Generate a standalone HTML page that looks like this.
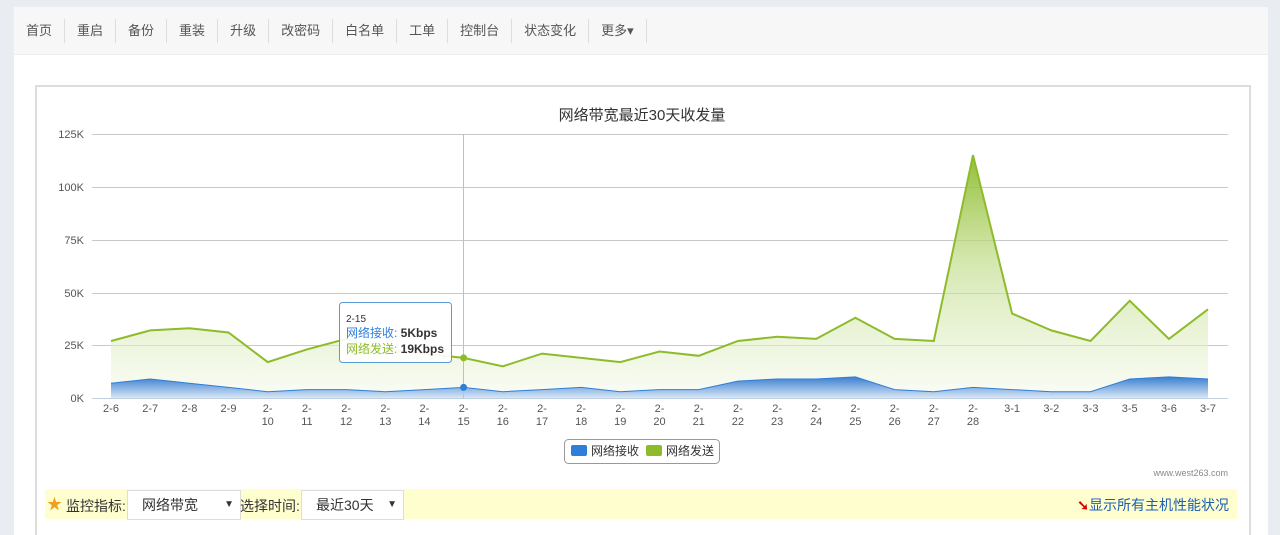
<!DOCTYPE html>
<html><head><meta charset="utf-8"><style>
html,body{margin:0;width:1280px;height:535px;overflow:hidden}
body{background:#e9edf2;font-family:"Liberation Sans","Noto Sans CJK SC",sans-serif;position:relative}
.panel{position:absolute;left:14px;top:7px;width:1254px;height:528px;background:#fff}
.nav{height:47px;background:#f7f7f7;border-bottom:1px solid #eee;display:flex;align-items:center}
.nav span{font-size:13px;color:#555;padding:0 12px;border-right:1px solid #ddd;line-height:24px}
.box{position:absolute;left:35px;top:85px;width:1212px;height:460px;border:2px solid #ddd;border-bottom:none}
.bar{position:absolute;left:45px;top:489px;width:1192px;height:30px;background:#fefecf;font-size:14px;color:#333}
.sel{position:absolute;top:1px;height:30px;background:#fff;border:1px solid #ddd;box-sizing:border-box;font-size:14px;line-height:28px;padding-left:14px}
.sel i{position:absolute;right:6px;top:0;font-style:normal;font-size:10px}
</style></head><body>
<div class="panel">
<div class="nav"><span>首页</span><span>重启</span><span>备份</span><span>重装</span><span>升级</span><span>改密码</span><span>白名单</span><span>工单</span><span>控制台</span><span>状态变化</span><span>更多▾</span></div>
</div>
<div class="box"></div>
<svg width="1280" height="535" style="position:absolute;left:0;top:0" font-family="Liberation Sans, Noto Sans CJK SC, sans-serif">
<defs>
<linearGradient id="g" x1="0" y1="0" x2="0" y2="1"><stop offset="0" stop-color="#8dbb2a" stop-opacity=".95"/><stop offset=".45" stop-color="#c4de90" stop-opacity=".7"/><stop offset="1" stop-color="#f4f9ea" stop-opacity=".5"/></linearGradient>
<linearGradient id="b" x1="0" y1="0" x2="0" y2="1"><stop offset="0" stop-color="#3a7fd0"/><stop offset="1" stop-color="#d8e6f5"/></linearGradient>
</defs>
<text x="642" y="120" text-anchor="middle" font-size="15" fill="#333">网络带宽最近30天收发量</text>
<g stroke="#c8c8c8" stroke-width="1">
<line x1="92" y1="134.5" x2="1228" y2="134.5"/><line x1="92" y1="187.5" x2="1228" y2="187.5"/><line x1="92" y1="240.5" x2="1228" y2="240.5"/><line x1="92" y1="293.5" x2="1228" y2="293.5"/><line x1="92" y1="345.5" x2="1228" y2="345.5"/>
</g>
<g font-size="11" fill="#555" text-anchor="end">
<text x="84" y="138">125K</text><text x="84" y="191">100K</text><text x="84" y="244">75K</text><text x="84" y="297">50K</text><text x="84" y="349">25K</text><text x="84" y="402">0K</text>
</g>
<path d="M111,341 L150.2,330.4 189.4,328.3 228.5,332.5 267.7,362.1 306.9,349.4 346.1,338.9 385.3,349.4 424.4,353.6 463.6,357.9 502.8,366.3 542,353.6 581.2,357.9 620.3,362.1 659.5,351.5 698.7,355.8 737.9,341 777.1,336.8 816.2,338.9 855.4,317.7 894.6,338.9 933.8,341 973,155.1 1012.1,313.5 1051.3,330.4 1090.5,341 1129.7,300.8 1168.9,338.9 1208,309.3 L1208,398 L111,398Z" fill="url(#g)"/>
<path d="M111,341 L150.2,330.4 189.4,328.3 228.5,332.5 267.7,362.1 306.9,349.4 346.1,338.9 385.3,349.4 424.4,353.6 463.6,357.9 502.8,366.3 542,353.6 581.2,357.9 620.3,362.1 659.5,351.5 698.7,355.8 737.9,341 777.1,336.8 816.2,338.9 855.4,317.7 894.6,338.9 933.8,341 973,155.1 1012.1,313.5 1051.3,330.4 1090.5,341 1129.7,300.8 1168.9,338.9 1208,309.3" fill="none" stroke="#8dbb2a" stroke-width="2"/>
<path d="M111,383.2 L150.2,379 189.4,383.2 228.5,387.4 267.7,391.7 306.9,389.6 346.1,389.6 385.3,391.7 424.4,389.6 463.6,387.4 502.8,391.7 542,389.6 581.2,387.4 620.3,391.7 659.5,389.6 698.7,389.6 737.9,381.1 777.1,379 816.2,379 855.4,376.9 894.6,389.6 933.8,391.7 973,387.4 1012.1,389.6 1051.3,391.7 1090.5,391.7 1129.7,379 1168.9,376.9 1208,379 L1208,398 L111,398Z" fill="url(#b)"/>
<path d="M111,383.2 L150.2,379 189.4,383.2 228.5,387.4 267.7,391.7 306.9,389.6 346.1,389.6 385.3,391.7 424.4,389.6 463.6,387.4 502.8,391.7 542,389.6 581.2,387.4 620.3,391.7 659.5,389.6 698.7,389.6 737.9,381.1 777.1,379 816.2,379 855.4,376.9 894.6,389.6 933.8,391.7 973,387.4 1012.1,389.6 1051.3,391.7 1090.5,391.7 1129.7,379 1168.9,376.9 1208,379" fill="none" stroke="#2f7ed8" stroke-width="1"/>
<line x1="92" y1="398.5" x2="1228" y2="398.5" stroke="#c0d0e0"/>
<line x1="463.5" y1="134" x2="463.5" y2="398" stroke="#c0c0c0"/>
<circle cx="463.6" cy="357.9" r="3.5" fill="#8dbb2a"/><circle cx="463.6" cy="387.4" r="3.5" fill="#2f7ed8"/>
<g font-size="11" fill="#555" text-anchor="middle">
<text x="111" y="412">2-6</text><text x="150.2" y="412">2-7</text><text x="189.4" y="412">2-8</text><text x="228.5" y="412">2-9</text>
<text x="267.7" y="412">2-</text><text x="267.7" y="425">10</text><text x="306.9" y="412">2-</text><text x="306.9" y="425">11</text>
<text x="346.1" y="412">2-</text><text x="346.1" y="425">12</text><text x="385.3" y="412">2-</text><text x="385.3" y="425">13</text>
<text x="424.4" y="412">2-</text><text x="424.4" y="425">14</text><text x="463.6" y="412">2-</text><text x="463.6" y="425">15</text>
<text x="502.8" y="412">2-</text><text x="502.8" y="425">16</text><text x="542" y="412">2-</text><text x="542" y="425">17</text>
<text x="581.2" y="412">2-</text><text x="581.2" y="425">18</text><text x="620.3" y="412">2-</text><text x="620.3" y="425">19</text>
<text x="659.5" y="412">2-</text><text x="659.5" y="425">20</text><text x="698.7" y="412">2-</text><text x="698.7" y="425">21</text>
<text x="737.9" y="412">2-</text><text x="737.9" y="425">22</text><text x="777.1" y="412">2-</text><text x="777.1" y="425">23</text>
<text x="816.2" y="412">2-</text><text x="816.2" y="425">24</text><text x="855.4" y="412">2-</text><text x="855.4" y="425">25</text>
<text x="894.6" y="412">2-</text><text x="894.6" y="425">26</text><text x="933.8" y="412">2-</text><text x="933.8" y="425">27</text>
<text x="973" y="412">2-</text><text x="973" y="425">28</text>
<text x="1012.1" y="412">3-1</text><text x="1051.3" y="412">3-2</text><text x="1090.5" y="412">3-3</text><text x="1129.7" y="412">3-5</text><text x="1168.9" y="412">3-6</text><text x="1208" y="412">3-7</text>
</g>
<rect x="339.5" y="302.5" width="112" height="60" rx="3" fill="#fff" fill-opacity=".92" stroke="#5b9bd5"/>
<text x="346" y="322" font-size="10" fill="#333">2-15</text>
<text x="346" y="337" font-size="12" fill="#2f7ed8">网络接收: <tspan fill="#333" font-weight="bold">5Kbps</tspan></text>
<text x="346" y="353" font-size="12" fill="#8dbb2a">网络发送: <tspan fill="#333" font-weight="bold">19Kbps</tspan></text>
<rect x="564.5" y="439.5" width="155" height="24" rx="4" fill="#fff" stroke="#999"/>
<rect x="571" y="445" width="16" height="11" rx="2" fill="#2f7ed8"/><text x="591" y="455" font-size="12" fill="#333">网络接收</text>
<rect x="646" y="445" width="16" height="11" rx="2" fill="#8dbb2a"/><text x="666" y="455" font-size="12" fill="#333">网络发送</text>
<text x="1228" y="476" text-anchor="end" font-size="9" fill="#888">www.west263.com</text>
</svg>
<div class="bar">
<span style="position:absolute;left:2px;top:4px;color:#f0a020;font-size:15px">★</span>
<span style="position:absolute;left:21px;top:7px">监控指标:</span>
<div class="sel" style="left:82px;width:114px">网络带宽<i>▼</i></div>
<span style="position:absolute;left:195px;top:7px">选择时间:</span>
<div class="sel" style="left:256px;width:103px">最近30天<i>▼</i></div>
<span style="position:absolute;right:8px;top:6px;color:#1a5fb4"><b style="color:#d00">➘</b>显示所有主机性能状况</span>
</div>
</body></html>
